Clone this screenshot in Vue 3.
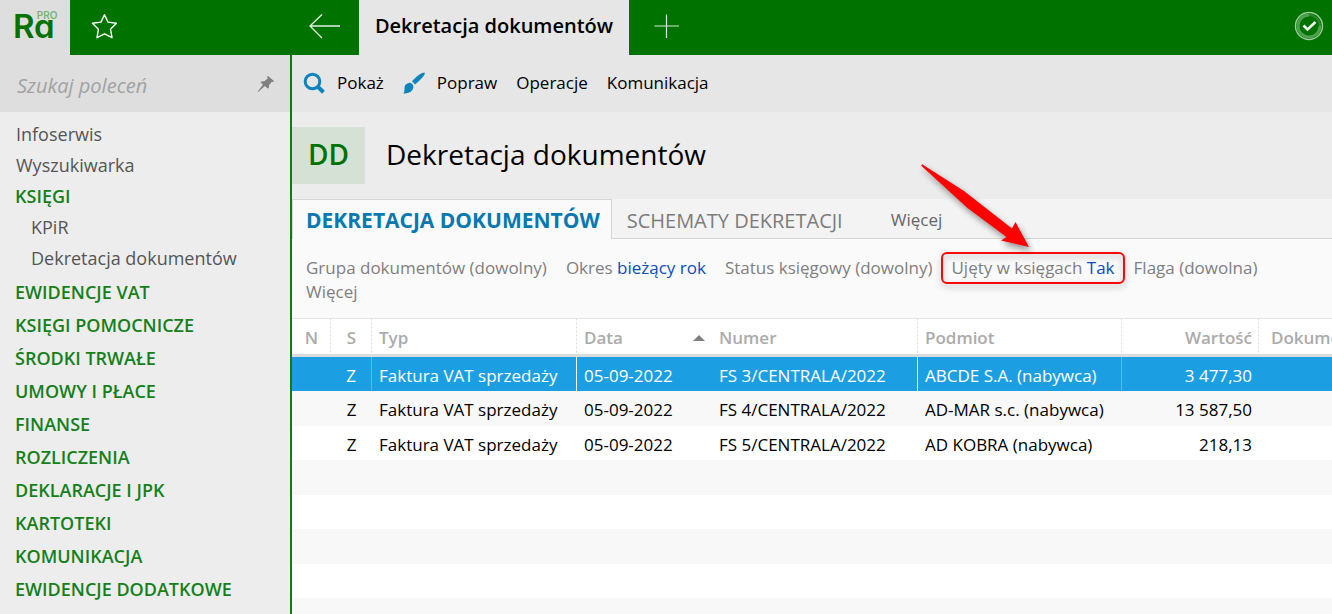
<script setup>
import { ref } from 'vue'

const query = ref('')

const menu = [
  { label: 'Infoserwis', kind: 'link' },
  { label: 'Wyszukiwarka', kind: 'link' },
  { label: 'KSIĘGI', kind: 'group', open: true, items: ['KPiR', 'Dekretacja dokumentów'] },
  { label: 'EWIDENCJE VAT', kind: 'group' },
  { label: 'KSIĘGI POMOCNICZE', kind: 'group' },
  { label: 'ŚRODKI TRWAŁE', kind: 'group' },
  { label: 'UMOWY I PŁACE', kind: 'group' },
  { label: 'FINANSE', kind: 'group' },
  { label: 'ROZLICZENIA', kind: 'group' },
  { label: 'DEKLARACJE I JPK', kind: 'group' },
  { label: 'KARTOTEKI', kind: 'group' },
  { label: 'KOMUNIKACJA', kind: 'group' },
  { label: 'EWIDENCJE DODATKOWE', kind: 'group' },
]

const filters = [
  { name: 'Grupa dokumentów', value: '(dowolny)' },
  { name: 'Okres', value: 'bieżący rok', set: true },
  { name: 'Status księgowy', value: '(dowolny)' },
  { name: 'Ujęty w księgach', value: 'Tak', set: true, marked: true },
  { name: 'Flaga', value: '(dowolna)' },
  { name: 'Więcej', value: '' },
]

const rows = [
  { typ: 'Faktura VAT sprzedaży', data: '05-09-2022', numer: 'FS 3/CENTRALA/2022', podmiot: 'ABCDE S.A. (nabywca)', wartosc: '3 477,30' },
  { typ: 'Faktura VAT sprzedaży', data: '05-09-2022', numer: 'FS 4/CENTRALA/2022', podmiot: 'AD-MAR s.c. (nabywca)', wartosc: '13 587,50' },
  { typ: 'Faktura VAT sprzedaży', data: '05-09-2022', numer: 'FS 5/CENTRALA/2022', podmiot: 'AD KOBRA (nabywca)', wartosc: '218,13' },
]
const emptyRows = 5
</script>

<template>
  <div class="app">
    <header class="topbar">
      <div class="logo">
        <span class="logo-name">Ra</span><span class="logo-pro">PRO</span>
      </div>
      <div class="topbar-tools">
        <button class="icon-btn" type="button" aria-label="Ulubione">
          <svg width="28" height="28" viewBox="0 0 28 28" fill="none" stroke="#fff" stroke-width="1.4" stroke-linejoin="round">
            <path d="M14.500 1.700 L18 9.100 L26.400 10.200 L20.500 16.300 L22 24.700 L14.500 20.800 L7 24.700 L8.400 16.300 L2.400 10.200 L10.900 9.100 Z" />
          </svg>
        </button>
        <button class="icon-btn" type="button" aria-label="Wstecz">
          <svg width="34" height="28" viewBox="0 0 34 28" fill="none" stroke="#e3f1e3" stroke-width="1.3">
            <path d="M32 13 H2 M14 1.500 L2 13 L14 25" />
          </svg>
        </button>
      </div>
      <button class="window-tab" type="button">Dekretacja dokumentów</button>
      <button class="icon-btn add" type="button" aria-label="Nowa karta">
        <svg width="26" height="26" viewBox="0 0 26 26" fill="none" stroke="#d5ead5" stroke-width="1.2">
          <path d="M13.500 1.500 V25 M1.500 13 H26" />
        </svg>
      </button>
      <button class="icon-btn status" type="button" aria-label="Stan">
        <svg width="30" height="30" viewBox="0 0 30 30" fill="none">
          <circle cx="15" cy="15" r="13.500" stroke="#9ccc9c" stroke-width="1.4" />
          <path d="M15 4 A11 11 0 1 0 26 15" stroke="#4fa04f" stroke-width="3" />
          <path d="M15 4 A11 11 0 0 1 26 15" stroke="#2c8a2c" stroke-width="2" />
          <path d="M9.500 14.500 L13.500 18.500 L21.500 11" stroke="#f0f7f0" stroke-width="2.600" />
        </svg>
      </button>
    </header>

    <div class="body">
      <aside class="sidebar">
        <div class="search">
          <input v-model="query" type="text" placeholder="Szukaj poleceń" aria-label="Szukaj poleceń" />
          <button class="icon-btn" type="button" aria-label="Przypnij">
            <svg width="18" height="18" viewBox="0 0 18 18" fill="#808080">
              <path d="M10.800 0.800 L17.200 6.200 L15.800 7 L14.800 6.800 L12 10.300 C12.300 12 11.800 13 11 13.800 L7.800 11 L1.200 17 L0.800 16.600 L6 9.600 L3.300 7.100 C4.400 6.300 5.600 6 7.300 6.300 L10.700 3.400 L10.300 2.300 Z" />
            </svg>
          </button>
        </div>
        <nav class="menu">
          <template v-for="entry in menu" :key="entry.label">
            <a href="#" :class="['menu-item', entry.kind, { open: entry.open }]">{{ entry.label }}</a>
            <div v-if="entry.items" class="submenu">
              <a v-for="sub in entry.items" :key="sub" href="#" class="menu-item sub">{{ sub }}</a>
            </div>
          </template>
        </nav>
      </aside>

      <main class="content">
        <div class="toolbar">
          <button class="tool show" type="button">
            <svg width="22" height="22" viewBox="0 0 22 22" fill="none" stroke="#0d84bd">
              <circle cx="9.500" cy="9.500" r="7.300" stroke-width="3" />
              <path d="M14.500 14.500 L20.500 20.200" stroke-width="4" />
            </svg>
            Pokaż
          </button>
          <button class="tool edit" type="button">
            <svg width="22" height="22" viewBox="0 0 22 22" fill="#0d84bd">
              <path d="M21.600 0.400 C22 1.600 21.400 2.900 20.600 3.900 C18.200 6.900 15 10.100 12.100 12.400 L9 9.300 C11.600 6.300 15.200 3 18.600 1.200 C19.600 0.700 20.600 0.400 21.600 0.400 Z" />
              <path d="M5.800 10.900 C8.600 10.600 10.800 13 10.300 15.800 C9.700 19.600 5.400 21.800 0.400 21.400 C2 19.600 1.100 17.500 1.700 14.600 C2.100 12.600 3.700 11.100 5.800 10.900 Z" />
            </svg>
            Popraw
          </button>
          <button class="tool" type="button">Operacje</button>
          <button class="tool" type="button">Komunikacja</button>
        </div>

        <div class="heading">
          <span class="badge">DD</span>
          <h1>Dekretacja dokumentów</h1>
        </div>

        <div class="tabs">
          <button class="tab active" type="button">DEKRETACJA DOKUMENTÓW</button>
          <button class="tab" type="button">SCHEMATY DEKRETACJI</button>
          <button class="tab more" type="button">Więcej</button>
        </div>

        <div class="filters">
          <button v-for="f in filters" :key="f.name" type="button" :class="['filter', { marked: f.marked }]">
            {{ f.name }} <span v-if="f.value" :class="{ set: f.set }">{{ f.value }}</span>
            <svg v-if="f.marked" class="pointer" width="120" height="96" viewBox="0 0 120 96">
              <path d="M7.500 4.500 L49 31 L97 68.500 L100.500 62 L114 87 L86 80.500 L91.500 77 L52.500 48 L6.500 6 Q5.800 4.300 7.500 4.500 Z" fill="#ff0000" />
            </svg>
          </button>
        </div>

        <table class="grid">
          <colgroup>
            <col class="c-n" /><col class="c-s" /><col class="c-typ" /><col class="c-data" />
            <col class="c-numer" /><col class="c-podmiot" /><col class="c-wartosc" /><col />
          </colgroup>
          <thead>
            <tr>
              <th class="center">N</th>
              <th class="center">S</th>
              <th>Typ</th>
              <th class="sorted"><span>Data<i class="sort"></i></span></th>
              <th>Numer</th>
              <th>Podmiot</th>
              <th class="num">Wartość</th>
              <th class="doc">Dokument</th>
            </tr>
          </thead>
          <tbody>
            <tr v-for="(r, i) in rows" :key="r.numer" :class="{ selected: i === 0 }">
              <td></td>
              <td class="center line">Z</td>
              <td class="strong">{{ r.typ }}</td>
              <td>{{ r.data }}</td>
              <td class="strong">{{ r.numer }}</td>
              <td class="line">{{ r.podmiot }}</td>
              <td class="num">{{ r.wartosc }}</td>
              <td></td>
            </tr>
            <tr v-for="n in emptyRows" :key="n"><td colspan="8"></td></tr>
          </tbody>
        </table>
      </main>
    </div>
  </div>
</template>

<style>
html,
body {
  height: 100%;
  overflow: hidden;
}
#app {
  height: 100%;
}
</style>

<style scoped>
.app {
  display: flex;
  flex-direction: column;
  height: 100%;
  font-family: "Open Sans", "Noto Sans", sans-serif;
  font-size: 17px;
  color: #000;
}
button {
  font: inherit;
  color: inherit;
  background: none;
  border: 0;
  padding: 0;
  margin: 0;
  white-space: nowrap;
}
svg {
  display: block;
  flex: none;
}

.topbar {
  display: flex;
  align-items: stretch;
  height: 55px;
  flex: none;
  background: #007200;
}
.logo {
  display: flex;
  box-sizing: border-box;
  width: 70px;
  padding: 9px 0 0 13px;
  background: #dedede;
  font-family: Inter, "Open Sans", sans-serif;
  color: #007200;
}
.logo-name {
  font-size: 33px;
  line-height: 34px;
  font-weight: 600;
  font-feature-settings: "cv11";
}
.logo-pro {
  margin-left: -18px;
  font-size: 10px;
  line-height: 12px;
  font-weight: 600;
  color: #78b478;
}
.topbar-tools {
  display: flex;
  justify-content: space-between;
  align-items: center;
  box-sizing: border-box;
  width: 289px;
  padding: 0 17px 2px 20px;
}
.window-tab {
  width: 270px;
  padding-bottom: 4px;
  background: #e6e6e6;
  font-size: 20px;
  font-weight: 600;
}
.add {
  padding: 0 0 3px 24px;
}
.status {
  margin-left: auto;
  padding: 0 8px 3px 0;
}

.body {
  display: flex;
  flex: 1;
  min-height: 0;
}
.sidebar {
  width: 290px;
  flex: none;
  background: #ededed;
}
.search {
  display: flex;
  align-items: center;
  height: 57px;
  padding: 0 15px 0 16px;
  background: #dedede;
}
.search input {
  flex: 1;
  min-width: 0;
  padding: 3px 0 0 1px;
  border: 0;
  outline: 0;
  background: none;
  font: italic 20px "Open Sans", "Noto Sans", sans-serif;
  color: #333;
}
.search input::placeholder {
  color: #a2a2a2;
}
.menu {
  display: flex;
  flex-direction: column;
  padding-top: 7px;
}
.menu-item {
  display: block;
  padding-left: 16px;
  font-size: 18px;
  line-height: 31px;
  color: #555;
  text-decoration: none;
  white-space: nowrap;
}
.group {
  padding-left: 15px;
  font-weight: 600;
  line-height: 33px;
  color: #15801a;
}
.group.open {
  line-height: 31px;
}
.submenu {
  padding-bottom: 2px;
}
.sub {
  padding-left: 31px;
}

.content {
  flex: 1;
  min-width: 0;
  display: flex;
  flex-direction: column;
  border-left: 2px solid #127c12;
  background: #fff;
  overflow: hidden;
}
.toolbar {
  display: flex;
  align-items: center;
  gap: 19px;
  height: 57px;
  flex: none;
  padding-left: 11px;
  background: #e6e6e6;
}
.tool {
  display: flex;
  align-items: center;
  gap: 12px;
  padding-bottom: 2px;
}
.heading {
  display: flex;
  align-items: center;
  gap: 21px;
  height: 87px;
  flex: none;
  background: #ececec;
}
.badge {
  width: 73px;
  line-height: 55px;
  padding-bottom: 2px;
  background: #d6e1d5;
  color: #007200;
  font-size: 28px;
  font-weight: 600;
  text-align: center;
}
h1 {
  margin: 0;
  padding-bottom: 4px;
  font-size: 28px;
  font-weight: 400;
}
.tabs {
  display: flex;
  height: 40px;
  flex: none;
  background: linear-gradient(#d6d6d6, #d6d6d6) bottom / 100% 1px no-repeat #f3f3f3;
}
.tab {
  padding: 2px 0 0 15px;
  font-size: 20px;
  color: #7c7c7c;
}
.tab.active {
  padding: 1px 11px 0 13px;
  background: #fafafa;
  border: 1px solid #d6d6d6;
  border-bottom: 0;
  font-size: 21px;
  font-weight: 700;
  color: #0878b0;
}
.tab.more {
  padding: 0 0 0 48px;
  font-size: 17px;
  color: #666;
}
.filters {
  display: flex;
  flex-wrap: wrap;
  align-content: flex-start;
  column-gap: 19px;
  box-sizing: border-box;
  min-height: 79px;
  flex: none;
  padding: 17px 20px 14px 14px;
  background: #fafafa;
}
.filter {
  line-height: 24px;
  color: #7f7f7f;
}
.filter .set {
  color: #0a4dbe;
}
.marked {
  position: relative;
}
.marked::after {
  content: "";
  position: absolute;
  inset: -4px -10px -4px -10px;
  border: 2px solid #f80a0a;
  border-radius: 6px;
  filter: drop-shadow(0 3px 3px rgba(0, 0, 0, 0.3));
}
.pointer {
  position: absolute;
  right: 80px;
  bottom: 24px;
  z-index: 1;
  filter: drop-shadow(2px 4px 3px rgba(0, 0, 0, 0.4));
}

.grid {
  width: 100%;
  table-layout: fixed;
  border-collapse: separate;
  border-spacing: 0;
}
.c-n { width: 39px; }
.c-s { width: 41px; }
.c-typ { width: 205px; }
.c-data { width: 135px; }
.c-numer { width: 206px; }
.c-podmiot { width: 204px; }
.c-wartosc { width: 137px; }
th,
td {
  box-sizing: border-box;
  padding: 2px 7px 0;
  text-align: left;
  white-space: nowrap;
  overflow: hidden;
}
th {
  height: 39px;
  border-top: 1px solid #e6e6e6;
  border-bottom: 3px solid #dcdcdc;
  background: linear-gradient(transparent 50%, #fff 50%) right / 1px 4px repeat-y,
    linear-gradient(#dcdcdc, #dcdcdc) right / 1px 100% no-repeat;
  font-weight: 600;
  color: #ababab;
}
th:nth-child(4) {
  background: none;
}
th.doc {
  padding-left: 12px;
  padding-right: 0;
  background: none;
}
.sorted span {
  display: flex;
  align-items: center;
  justify-content: space-between;
}
.sort {
  border: 6px solid transparent;
  border-top: 0;
  border-bottom: 6px solid #808080;
}
.center {
  text-align: center;
}
.num {
  text-align: right;
}
td {
  height: 34px;
}
tbody tr:nth-child(even) td {
  height: 35px;
  background: #f8f8f8;
}
.selected td {
  background: #1c9fe2;
  color: #fff;
}
.selected .line {
  border-right: 1px solid #55b8ea;
}
.selected .strong {
  border-right: 1px solid #fff;
}
</style>
